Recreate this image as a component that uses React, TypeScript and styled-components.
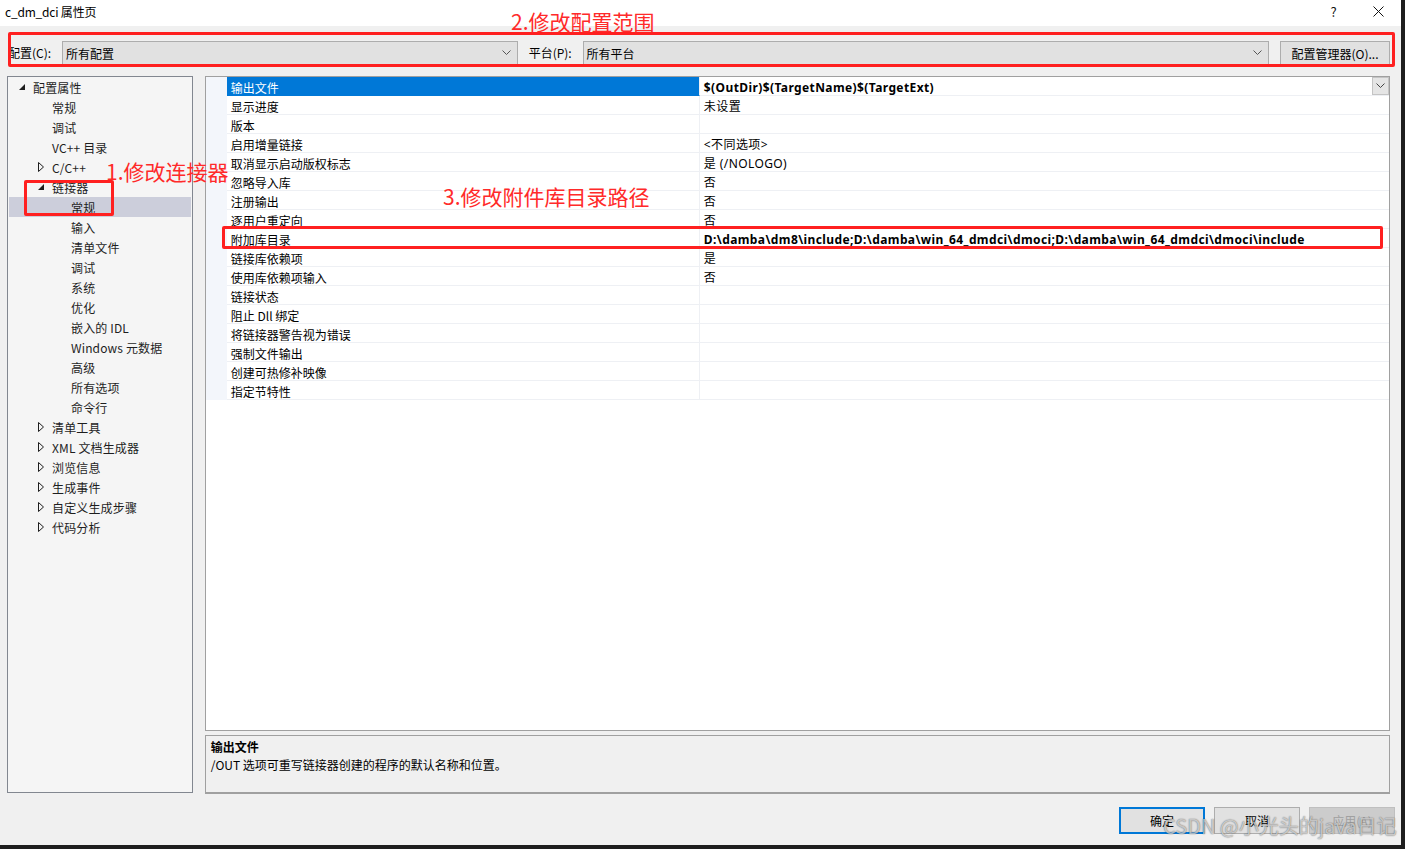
import React from "react";
import styled, { createGlobalStyle } from "styled-components";

const GlobalStyle = createGlobalStyle`
  html, body { margin: 0; padding: 0; background: #1e1e1e; }
  body { font-family: "Noto Sans CJK SC", "Noto Sans", sans-serif; font-size: 12px; color: #000; }
  * { box-sizing: border-box; }
`;

const Root = styled.div`
  position: relative;
  width: 1405px;
  height: 849px;
  background: #1e1e1e;
  overflow: hidden;
`;

const Win = styled.div`
  width: 1401px;
  height: 845px;
  background: #f0f0f0;
  display: flex;
  flex-direction: column;
`;

const TitleBar = styled.div`
  height: 26px;
  background: #ffffff;
  display: flex;
  align-items: center;
  padding: 0 0 4px 5px;
  font-size: 12px;
`;

const Title = styled.div`
  flex: 1;
  letter-spacing: -0.2px;
`;

const TitleBtn = styled.div`
  width: 45px;
  height: 22px;
  display: flex;
  align-items: center;
  justify-content: center;
  font-size: 13px;
  color: #111;
`;

const Toolbar = styled.div`
  height: 50px;
  padding: 15px 11px 0 8px;
  display: flex;
  align-items: flex-start;
`;

const Label = styled.div<{ $pl?: number }>`
  height: 24px;
  line-height: 24px;
  padding-left: ${(p) => p.$pl ?? 0}px;
  width: ${(p) => (p.$pl ?? 0) + 54}px;
  white-space: nowrap;
`;

const Combo = styled.div<{ $w: number }>`
  width: ${(p) => p.$w}px;
  height: 24px;
  background: #e1e1e1;
  border: 1px solid #adadad;
  display: flex;
  align-items: center;
  padding: 0 6px 0 3px;
  justify-content: space-between;
`;

const Button = styled.div<{ $w?: number; $primary?: boolean; $disabled?: boolean }>`
  width: ${(p) => p.$w ?? 86}px;
  height: 24px;
  background: ${(p) => (p.$disabled ? "#cccccc" : "#e1e1e1")};
  border: ${(p) => (p.$primary ? "2px solid #0078d7" : p.$disabled ? "1px solid #bfbfbf" : "1px solid #adadad")};
  color: ${(p) => (p.$disabled ? "#a0a0a0" : "#000")};
  display: flex;
  align-items: center;
  justify-content: center;
  white-space: nowrap;
`;

const ToolButton = styled(Button)`
  margin-left: 11px;
`;

const Main = styled.div`
  height: 718px;
  display: flex;
  padding: 0 11px 0 7px;
  gap: 12px;
`;

const Tree = styled.div`
  width: 186px;
  height: 717px;
  background: #f5f5f5;
  border: 1px solid #828790;
  padding: 0 1px;
`;

const TreeRow = styled.div<{ $level: number; $selected?: boolean }>`
  height: 20px;
  display: flex;
  align-items: center;
  padding-left: ${(p) => 8 + p.$level * 19}px;
  background: ${(p) => (p.$selected ? "#cccedb" : "transparent")};
  color: #1e1e1e;
  white-space: nowrap;
`;

const TreeLabel = styled.span`
  letter-spacing: 0.15px;
`;

const Arrow = styled.div`
  width: 16px;
  height: 20px;
  display: flex;
  align-items: center;
`;

const RightCol = styled.div`
  width: 1186px;
  display: flex;
  flex-direction: column;
  gap: 4px;
`;

const Grid = styled.div`
  height: 655px;
  background: #ffffff;
  border: 1px solid #a0a0a0;
  display: flex;
  flex-direction: column;
`;

const PropRow = styled.div`
  height: 19px;
  display: flex;
`;

const Margin = styled.div`
  width: 21px;
  background: #f3f6fb;
`;

const NameCell = styled.div<{ $selected?: boolean }>`
  width: 473px;
  padding: 2px 0 0 4px;
  display: flex;
  align-items: center;
  background: ${(p) => (p.$selected ? "#0078d7" : "#ffffff")};
  color: ${(p) => (p.$selected ? "#ffffff" : "#000")};
  border-bottom: 1px solid ${(p) => (p.$selected ? "#0078d7" : "#eef0f4")};
  border-right: 1px solid #eef0f4;
  white-space: nowrap;
`;

const ValueCell = styled.div<{ $bold?: boolean }>`
  flex: 1;
  padding: 0 0 0 4px;
  display: flex;
  align-items: center;
  justify-content: space-between;
  border-bottom: 1px solid #eef0f4;
  font-weight: ${(p) => (p.$bold ? 700 : 400)};
  white-space: nowrap;
`;

const ValueText = styled.span`
  font-family: "Noto Sans", "Noto Sans CJK SC", sans-serif;
  letter-spacing: 0.4px;
  padding-top: 2px;
`;

const DropBtn = styled.div`
  width: 17px;
  height: 18px;
  background: #e5e5e5;
  border: 1px solid #c4c4c4;
  display: flex;
  align-items: center;
  justify-content: center;
`;

const Desc = styled.div`
  height: 59px;
  background: #f0f0f0;
  border: 1px solid #a0a0a0;
  border-bottom: 2px solid #a0a0a0;
  padding: 1px 5px;
  display: flex;
  flex-direction: column;
`;

const DescTitle = styled.div`
  font-weight: 700;
  height: 19px;
  line-height: 19px;
`;

const DescText = styled.div`
  height: 18px;
  line-height: 18px;
`;

const Footer = styled.div`
  height: 51px;
  display: flex;
  justify-content: flex-end;
  padding: 13px 6px 0 0;
  gap: 9px;
`;

const FooterButton = styled(Button)`
  height: 27px;
`;

const RedBox = styled.div<{ $x: number; $y: number; $w: number; $h: number }>`
  position: absolute;
  left: ${(p) => p.$x}px;
  top: ${(p) => p.$y}px;
  width: ${(p) => p.$w}px;
  height: ${(p) => p.$h}px;
  border: 3px solid #ff2020;
  border-radius: 2px;
  pointer-events: none;
`;

const RedText = styled.div<{ $x: number; $y: number }>`
  position: absolute;
  left: ${(p) => p.$x}px;
  top: ${(p) => p.$y}px;
  color: #ff2a2a;
  font-size: 21px;
  line-height: 24px;
  white-space: nowrap;
  font-family: "Noto Sans CJK SC", sans-serif;
`;

const Watermark = styled.div`
  position: absolute;
  left: 1163px;
  top: 812px;
  font-size: 20px;
  line-height: 28px;
  color: rgba(238, 238, 238, 0.7);
  text-shadow: 0 0 1px rgba(0, 0, 0, 0.5), 0 0 2px rgba(0, 0, 0, 0.2);
  white-space: nowrap;
  font-family: "Noto Sans CJK SC", "Noto Sans", sans-serif;
`;

const Chevron = ({ color = "#555" }: { color?: string }) => (
  <svg width="9" height="6" viewBox="0 0 9 6">
    <path d="M0.5 0.5 L4.5 4.5 L8.5 0.5" fill="none" stroke={color} strokeWidth="1" />
  </svg>
);

const Expanded = () => (
  <svg width="16" height="20" viewBox="0 0 16 20">
    <path d="M8 7 L8 13 L2 13 Z" fill="#1e1e1e" />
  </svg>
);

const Collapsed = () => (
  <svg width="16" height="20" viewBox="0 0 16 20">
    <path d="M2.5 5.5 L7.5 10 L2.5 14.5 Z" fill="none" stroke="#1e1e1e" strokeWidth="1" />
  </svg>
);

const CloseIcon = () => (
  <svg width="11" height="11" viewBox="0 0 11 11">
    <path d="M0.5 0.5 L10.5 10.5 M10.5 0.5 L0.5 10.5" stroke="#111" strokeWidth="1" />
  </svg>
);

type TreeItem = { label: string; level: number; state?: "open" | "closed"; selected?: boolean };

const treeItems: TreeItem[] = [
  { label: "配置属性", level: 0, state: "open" },
  { label: "常规", level: 1 },
  { label: "调试", level: 1 },
  { label: "VC++ 目录", level: 1 },
  { label: "C/C++", level: 1, state: "closed" },
  { label: "链接器", level: 1, state: "open" },
  { label: "常规", level: 2, selected: true },
  { label: "输入", level: 2 },
  { label: "清单文件", level: 2 },
  { label: "调试", level: 2 },
  { label: "系统", level: 2 },
  { label: "优化", level: 2 },
  { label: "嵌入的 IDL", level: 2 },
  { label: "Windows 元数据", level: 2 },
  { label: "高级", level: 2 },
  { label: "所有选项", level: 2 },
  { label: "命令行", level: 2 },
  { label: "清单工具", level: 1, state: "closed" },
  { label: "XML 文档生成器", level: 1, state: "closed" },
  { label: "浏览信息", level: 1, state: "closed" },
  { label: "生成事件", level: 1, state: "closed" },
  { label: "自定义生成步骤", level: 1, state: "closed" },
  { label: "代码分析", level: 1, state: "closed" },
];

type Prop = { name: string; value?: string; bold?: boolean; selected?: boolean };

const props: Prop[] = [
  { name: "输出文件", value: "$(OutDir)$(TargetName)$(TargetExt)", bold: true, selected: true },
  { name: "显示进度", value: "未设置" },
  { name: "版本" },
  { name: "启用增量链接", value: "<不同选项>" },
  { name: "取消显示启动版权标志", value: "是 (/NOLOGO)" },
  { name: "忽略导入库", value: "否" },
  { name: "注册输出", value: "否" },
  { name: "逐用户重定向", value: "否" },
  {
    name: "附加库目录",
    value: "D:\\damba\\dm8\\include;D:\\damba\\win_64_dmdci\\dmoci;D:\\damba\\win_64_dmdci\\dmoci\\include",
    bold: true,
  },
  { name: "链接库依赖项", value: "是" },
  { name: "使用库依赖项输入", value: "否" },
  { name: "链接状态" },
  { name: "阻止 Dll 绑定" },
  { name: "将链接器警告视为错误" },
  { name: "强制文件输出" },
  { name: "创建可热修补映像" },
  { name: "指定节特性" },
];

export default function App() {
  return (
    <Root>
      <GlobalStyle />
      <Win>
        <TitleBar>
          <Title>c_dm_dci 属性页</Title>
          <TitleBtn>?</TitleBtn>
          <TitleBtn>
            <CloseIcon />
          </TitleBtn>
        </TitleBar>
        <Toolbar>
          <Label>配置(C):</Label>
          <Combo $w={456}>
            <span>所有配置</span>
            <Chevron />
          </Combo>
          <Label $pl={11}>平台(P):</Label>
          <Combo $w={687}>
            <span>所有平台</span>
            <Chevron />
          </Combo>
          <ToolButton $w={110}>配置管理器(O)...</ToolButton>
        </Toolbar>
        <Main>
          <Tree>
            {treeItems.map((t, i) => (
              <TreeRow key={i} $level={t.level} $selected={t.selected}>
                <Arrow>{t.state === "open" ? <Expanded /> : t.state === "closed" ? <Collapsed /> : null}</Arrow>
                <TreeLabel>{t.label}</TreeLabel>
              </TreeRow>
            ))}
          </Tree>
          <RightCol>
            <Grid>
              {props.map((p, i) => (
                <PropRow key={i}>
                  <Margin />
                  <NameCell $selected={p.selected}>{p.name}</NameCell>
                  <ValueCell $bold={p.bold}>
                    <ValueText>{p.value ?? ""}</ValueText>
                    {p.selected ? (
                      <DropBtn>
                        <Chevron color="#444" />
                      </DropBtn>
                    ) : null}
                  </ValueCell>
                </PropRow>
              ))}
            </Grid>
            <Desc>
              <DescTitle>输出文件</DescTitle>
              <DescText>/OUT 选项可重写链接器创建的程序的默认名称和位置。</DescText>
            </Desc>
          </RightCol>
        </Main>
        <Footer>
          <FooterButton $primary>确定</FooterButton>
          <FooterButton>取消</FooterButton>
          <FooterButton $disabled>应用(A)</FooterButton>
        </Footer>
      </Win>

      <RedBox $x={8} $y={32} $w={1387} $h={35} />
      <RedText $x={511} $y={9}>2.修改配置范围</RedText>
      <RedBox $x={24} $y={180} $w={90} $h={36} />
      <RedText $x={106} $y={159}>1.修改连接器</RedText>
      <RedText $x={443} $y={184}>3.修改附件库目录路径</RedText>
      <RedBox $x={222} $y={226} $w={1161} $h={23} />
      <Watermark>CSDN @小光头的java日记</Watermark>
    </Root>
  );
}
